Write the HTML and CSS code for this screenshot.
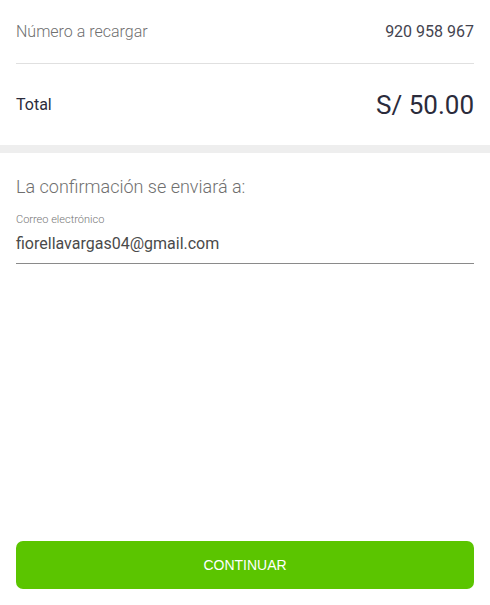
FILE: index.html
```html
<!DOCTYPE html>
<html lang="es">
<head>
<meta charset="utf-8">
<link rel="stylesheet" href="styles.css">
</head>
<body>
<div class="page">
  <section class="summary">
    <div class="row row-number">
      <span class="label">Número a recargar</span>
      <span class="value">920 958 967</span>
    </div>
    <div class="row row-total">
      <span class="total-label">Total</span>
      <span class="total-value">S/ 50.00</span>
    </div>
  </section>
  <div class="band"></div>
  <section class="confirm">
    <h2 class="confirm-title">La confirmación se enviará a:</h2>
    <div class="field">
      <label class="field-label">Correo electrónico</label>
      <div class="field-input">fiorellavargas04@gmail.com</div>
    </div>
  </section>
  <div class="spacer"></div>
  <div class="actions">
    <button class="btn">CONTINUAR</button>
  </div>
</div>
</body>
</html>
```
FILE: styles.css
```css
* { box-sizing: border-box; }
html, body { margin: 0; padding: 0; background: #fff; }
body { font-family: Roboto, "Liberation Sans", sans-serif; }
.page { width: 490px; height: 605px; display: flex; flex-direction: column; }
.summary { padding: 0 16px; }
.row { display: flex; justify-content: space-between; align-items: center; }
.row-number { height: 64px; border-bottom: 1px solid #e0e0e0; }
.label { font-weight: 300; font-size: 16px; color: #6f6f6f; }
.value { font-size: 16px; color: #44444f; }
.row-total { height: 81px; }
.total-label { font-size: 16px; color: #2b2b3b; }
.total-value { font-size: 26px; color: #2b2b3b; }
.band { height: 8px; background: #eeeeee; }
.confirm { padding: 0 16px; }
.confirm-title { margin: 22px 0 0; font-weight: 300; font-size: 18px; color: #6f6f6f; line-height: 24px; }
.field { margin-top: 14px; }
.field-label { display: block; font-size: 11px; color: #757575; font-weight: 300; line-height: 14px; }
.field-input { font-size: 16px; color: #4a4a4a; line-height: 22px; padding-top: 6px; padding-bottom: 8px; border-bottom: 1px solid #8a8a8a; }
.spacer { flex: 1; }
.actions { padding: 0 16px 16px; }
.btn { width: 100%; height: 48px; border: 0; border-radius: 7px; background: #5bc500; color: #fff; font-family: "Liberation Sans", Arial, sans-serif; font-size: 14px; cursor: pointer; }
```
